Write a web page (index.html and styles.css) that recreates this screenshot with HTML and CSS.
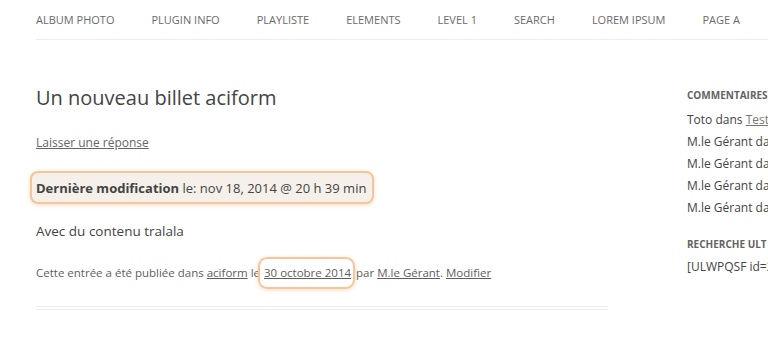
FILE: index.html
```html
<!DOCTYPE html>
<html lang="fr">
<head>
  <meta charset="UTF-8" />
  <title>Un nouveau billet aciform</title>
  <link rel="stylesheet" href="styles.css">
</head>
<body>
  <nav class="main-nav">
    <a href="#">Album photo</a>
    <a href="#">Plugin info</a>
    <a href="#">Playliste</a>
    <a href="#">Elements</a>
    <a href="#">Level 1</a>
    <a href="#">Search</a>
    <a href="#">Lorem ipsum</a>
    <a href="#">Page A</a>
  </nav>

  <div class="page">
    <article class="entry">
      <h1 class="entry-title">Un nouveau billet aciform</h1>
      <p class="comments-link"><a href="#">Laisser une réponse</a></p>
      <p class="last-modified"><strong>Dernière modification</strong> le: nov 18, 2014 @ 20 h 39 min</p>
      <p class="entry-content">Avec du contenu tralala</p>
      <p class="entry-meta">Cette entrée a été publiée dans <a href="#">aciform</a> le <a href="#" class="highlight-date">30 octobre 2014</a> par <a href="#">M.le Gérant</a>. <a href="#">Modifier</a></p>
      <div class="entry-sep"></div>
    </article>

    <aside class="sidebar">
      <h3 class="widget-title">Commentaires</h3>
      <ul class="widget-list">
        <li>Toto dans <a href="#">Test</a></li>
        <li>M.le Gérant dans <a href="#">Un billet</a></li>
        <li>M.le Gérant dans <a href="#">Un billet</a></li>
        <li>M.le Gérant dans <a href="#">Un billet</a></li>
        <li>M.le Gérant dans <a href="#">Un billet</a></li>
      </ul>
      <h3 class="widget-title">Recherche ULT</h3>
      <p class="widget-text">[ULWPQSF id=2]</p>
    </aside>
  </div>
</body>
</html>
```
FILE: styles.css
```css
html, body {
  margin: 0;
  padding: 0;
  background: #fff;
  overflow: hidden;
}
body {
  font-family: 'Open Sans', sans-serif;
  color: #444;
  width: 768px;
}
a {
  color: #444;
}
.main-nav {
  display: flex;
  gap: 37px;
  margin: 0 0 0 36px;
  padding: 12px 0 12px;
  border-bottom: 1px solid #ededed;
  white-space: nowrap;
}
.main-nav a {
  font-size: 11px;
  line-height: 15px;
  text-transform: uppercase;
  text-decoration: none;
  color: #6a6a6a;
}
.page {
  display: flex;
  padding-left: 36px;
  padding-top: 44px;
}
.entry {
  width: 572px;
  flex-shrink: 0;
}
.entry-title {
  font-size: 20px;
  font-weight: normal;
  line-height: 28px;
  margin: 0;
}
.comments-link {
  font-size: 12px;
  margin: 22px 0 0;
  line-height: 18px;
}
.comments-link a {
  color: #666;
}
.last-modified {
  display: inline-block;
  font-size: 13px;
  line-height: 20px;
  margin: 19px 0 0 -6px;
  padding: 5px 6px 4px 4px;
  background: #f6f0ea;
  border: 2px solid #f6c59a;
  border-radius: 8px;
  box-shadow: 0 1px 4px rgba(240, 170, 110, 0.45);
}
.entry-content {
  font-size: 13.5px;
  line-height: 20px;
  margin: 17px 0 0;
}
.entry-meta {
  font-size: 11.5px;
  line-height: 18px;
  color: #5e5e5e;
  margin: 23px 0 0;
}
.entry-meta a {
  color: #5e5e5e;
}
.highlight-date {
  display: inline-block;
  padding: 5px 2px 5px 4px;
  margin: -7px -2px -7px -5px;
  border: 2px solid #f6c59a;
  border-radius: 9px;
  box-shadow: 0 1px 4px rgba(240, 170, 110, 0.45);
}
.entry-sep {
  margin-top: 24px;
  height: 2px;
  border-top: 1px solid #ededed;
  border-bottom: 1px solid #ededed;
}
.sidebar {
  margin-left: 79px;
  width: 200px;
  flex-shrink: 0;
  white-space: nowrap;
  padding-top: 3px;
}
.widget-title {
  font-size: 10px;
  font-weight: bold;
  text-transform: uppercase;
  color: #636363;
  margin: 0;
  line-height: 16px;
}
.widget-list {
  list-style: none;
  margin: 6px 0 0;
  padding: 0;
}
.widget-list li {
  font-size: 12px;
  line-height: 22px;
}
.widget-list a {
  color: #777;
}
.widget-list + .widget-title {
  margin-top: 17px;
}
.widget-text {
  font-size: 12px;
  line-height: 20px;
  margin: 5px 0 0;
}
```
